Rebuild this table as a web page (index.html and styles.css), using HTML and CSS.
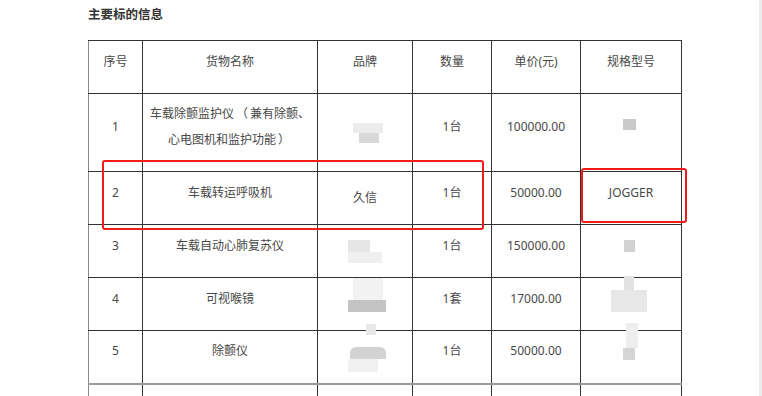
FILE: index.html
```html
<!DOCTYPE html>
<html lang="zh-CN">
<head>
<meta charset="utf-8">
<title>主要标的信息</title>
<link rel="stylesheet" href="styles.css">
</head>
<body>
<div class="page">
  <div class="content">
    <h3 class="title">主要标的信息</h3>
    <div class="table-wrap">
      <table class="goods">
        <colgroup>
          <col class="c-no"><col class="c-name"><col class="c-brand"><col class="c-qty"><col class="c-price"><col class="c-spec">
        </colgroup>
        <tr class="r-head">
          <td>序号</td><td>货物名称</td><td>品牌</td><td>数量</td><td>单价(元)</td><td>规格型号</td>
        </tr>
        <tr class="r-tall">
          <td>1</td><td>车载除颤监护仪<span class="paren">（</span>兼有除颤、<br>心电图机和监护功能<span class="paren">）</span></td><td class="brand"></td><td>1台</td><td>100000.00</td><td></td>
        </tr>
        <tr class="r-row">
          <td>2</td><td>车载转运呼吸机</td><td class="brand">久信</td><td>1台</td><td>50000.00</td><td>JOGGER</td>
        </tr>
        <tr class="r-row">
          <td>3</td><td>车载自动心肺复苏仪</td><td class="brand"></td><td>1台</td><td>150000.00</td><td></td>
        </tr>
        <tr class="r-row">
          <td>4</td><td>可视喉镜</td><td class="brand"></td><td>1套</td><td>17000.00</td><td></td>
        </tr>
        <tr class="r-row r-last">
          <td>5</td><td>除颤仪</td><td class="brand"></td><td>1台</td><td>50000.00</td><td></td>
        </tr>
        <tr class="r-row r-more">
          <td></td><td></td><td></td><td></td><td></td><td></td>
        </tr>
      </table>

      <div class="blur b1a"></div><div class="blur b1b"></div>
      <div class="blur s1"></div>
      <div class="blur b3a"></div><div class="blur b3b"></div>
      <div class="blur s3"></div>
      <div class="blur b4a"></div><div class="blur b4b"></div>
      <div class="blur b45"></div>
      <div class="blur s4a"></div><div class="blur s4b"></div>
      <div class="blur b5a"></div><div class="blur b5b"></div>
      <div class="blur s5a"></div><div class="blur s5b"></div>

      <div class="mark mark-row"></div>
      <div class="mark mark-spec"></div>
    </div>
  </div>
</div>
</body>
</html>
```

FILE: styles.css
```css
* { box-sizing: border-box; }
html, body { margin: 0; padding: 0; background: #fff; }
body {
  font-family: "Noto Sans", "Noto Sans CJK SC", sans-serif;
  font-size: 12px;
  color: #484848;
}
.page {
  width: 762px;
  height: 396px;
  overflow: hidden;
  border-right: 3px solid #ececec;
}
.content { padding-left: 88px; }
.title {
  margin: 5px 0 0;
  font-size: 12.5px;
  line-height: 20px;
  font-weight: bold;
  color: #333;
}
.table-wrap {
  position: relative;
  margin-top: 15px;
  width: 593px;
}
.goods {
  border-collapse: collapse;
  table-layout: fixed;
  width: 593px;
}
.c-no { width: 54px; }
.c-name { width: 175px; }
.c-brand { width: 95px; }
.c-qty { width: 79px; }
.c-price { width: 89px; }
.c-spec { width: 101px; }
.goods td {
  border: 1px solid #333;
  text-align: center;
  vertical-align: middle;
  padding: 0 4px 11px;
  line-height: 26px;
}
.paren { padding: 0 2px; }
.goods tr > td:first-child { border-left-color: #8a8a8a; }
.goods td.brand { padding-bottom: 0; }
.r-head td { height: 53px; }
.r-tall td { height: 78px; }
.r-row td { height: 53px; }
.r-last td { border-bottom: 2px solid #9a9a9a; }

.blur { position: absolute; }
/* row 1 brand */
.b1a { left: 265px; top: 83px; width: 30px; height: 10px; background: #ececec; }
.b1b { left: 271px; top: 93px; width: 20px; height: 10px; background: #d9d9d9; }
/* row 1 spec */
.s1 { left: 535px; top: 79px; width: 13px; height: 11px; background: #c9c9c9; }
/* row 3 brand */
.b3a { left: 260px; top: 200px; width: 22px; height: 12px; background: #e6e6e6; }
.b3b { left: 260px; top: 212px; width: 34px; height: 11px; background: #efefef; }
/* row 3 spec */
.s3 { left: 536px; top: 200px; width: 11px; height: 12px; background: #d2d2d2; }
/* row 4 brand */
.b4a { left: 265px; top: 238px; width: 30px; height: 22px; background: #f2f2f2; }
.b4b { left: 260px; top: 260px; width: 38px; height: 12px; background: #c4c4c4; }
.b45 { left: 278px; top: 284px; width: 10px; height: 11px; background: #e8e8e8; }
/* row 4 spec */
.s4a { left: 536px; top: 236px; width: 10px; height: 22px; background: #e2e2e2; }
.s4b { left: 523px; top: 250px; width: 36px; height: 22px; background: #e7e7e7; }
/* row 5 brand */
.b5a { left: 262px; top: 307px; width: 36px; height: 12px; background: #d3d3d3; border-radius: 6px 6px 0 0; }
.b5b { left: 260px; top: 319px; width: 30px; height: 13px; background: #f1f1f1; }
/* row 5 spec */
.s5a { left: 538px; top: 283px; width: 12px; height: 25px; background: #eeeeee; }
.s5b { left: 535px; top: 308px; width: 12px; height: 12px; background: #d5d5d5; }

.mark {
  position: absolute;
  border: 2px solid #f31c1c;
  border-radius: 3px;
}
.mark-row { left: 14px; top: 120px; width: 382px; height: 70px; }
.mark-spec { left: 493px; top: 128px; width: 106px; height: 55px; }
```
